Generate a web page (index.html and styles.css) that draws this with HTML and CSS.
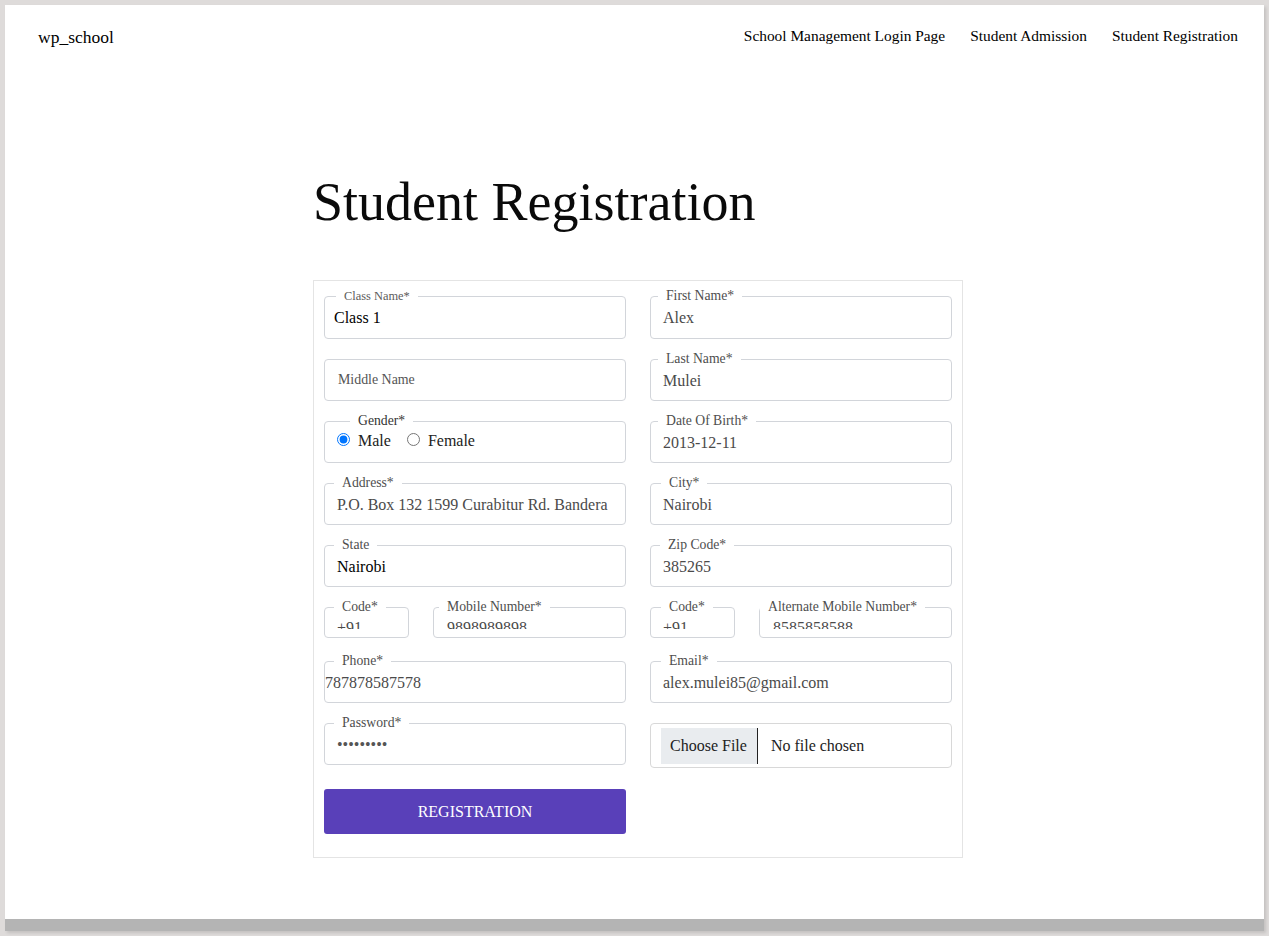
FILE: index.html
```html
<!DOCTYPE html>
<html lang="en">
<head>
<meta charset="utf-8">
<title>Student Registration</title>
<link rel="stylesheet" href="styles.css">
</head>
<body>
<div class="frame">
  <div class="page">
    <header class="topbar">
      <div class="brand">wp_school</div>
      <nav class="links">
        <a href="#">School Management Login Page</a>
        <a href="#">Student Admission</a>
        <a href="#">Student Registration</a>
      </nav>
    </header>
    <main class="main">
      <div class="col">
        <h1 class="title">Student Registration</h1>
        <form class="card">
          <div class="field first"><span class="lg lg-sm">Class Name*</span><div class="val pad9 dark">Class 1</div></div>
          <div class="field first"><span class="lg lg-r">First Name*</span><div class="val pad13">Alex</div></div>

          <div class="field"><div class="val pad14 ph">Middle Name</div></div>
          <div class="field"><span class="lg lg-r">Last Name*</span><div class="val pad13">Mulei</div></div>

          <div class="field"><span class="lg lg-wide">Gender*</span>
            <div class="val radios">
              <label class="opt"><input type="radio" name="g" checked> Male</label>
              <label class="opt"><input type="radio" name="g"> Female</label>
            </div>
          </div>
          <div class="field"><span class="lg lg-r">Date Of Birth*</span><div class="val pad13">2013-12-11</div></div>

          <div class="field"><span class="lg">Address*</span><div class="val pad13">P.O. Box 132 1599 Curabitur Rd. Bandera</div></div>
          <div class="field"><span class="lg lg-r2">City*</span><div class="val pad13">Nairobi</div></div>

          <div class="field"><span class="lg">State</span><div class="val pad13 dark">Nairobi</div></div>
          <div class="field"><span class="lg">Zip Code*</span><div class="val pad13">385265</div></div>

          <div class="pair">
            <div class="field sm code"><span class="lg">Code*</span><div class="clip pad13">+91</div></div>
            <div class="field sm grow"><span class="lg lg-m">Mobile Number*</span><div class="clip pad14">9898989898</div></div>
          </div>
          <div class="pair">
            <div class="field sm code"><span class="lg lg-r2">Code*</span><div class="clip pad13">+91</div></div>
            <div class="field sm grow"><span class="lg lg-tight">Alternate Mobile Number*</span><div class="clip pad14">8585858588</div></div>
          </div>

          <div class="field"><span class="lg">Phone*</span><div class="val pad0">787878587578</div></div>
          <div class="field"><span class="lg lg-r2">Email*</span><div class="val pad13">alex.mulei85@gmail.com</div></div>

          <div class="field"><span class="lg">Password*</span><div class="val pad13 dots">•••••••••</div></div>
          <div class="file">
            <span class="file-btn">Choose File</span>
            <span class="file-name">No file chosen</span>
          </div>

          <button type="button" class="submit">REGISTRATION</button>
        </form>
      </div>
    </main>
  </div>
  <div class="shadowbar"></div>
</div>
</body>
</html>
```

FILE: styles.css
```css
* { box-sizing: border-box; }

html, body {
  margin: 0;
  padding: 0;
}

body {
  background: #dedbda;
  font-family: "Liberation Serif", "Times New Roman", serif;
  color: #000;
  height: 936px;
  overflow: hidden;
}

.frame {
  margin: 5px 0 0 5px;
  width: 1259px;
  box-shadow: 2px 2px 3px rgba(0, 0, 0, 0.12);
}

.page {
  background: #fff;
  height: 914px;
}

.shadowbar {
  height: 12px;
  background: #b4b4b4;
}

.topbar {
  display: flex;
  justify-content: space-between;
  align-items: flex-start;
  padding: 22px 26px 0 33px;
}

.brand {
  font-size: 17.5px;
  line-height: 20px;
}

.links {
  display: flex;
  gap: 25px;
}

.links a {
  font-size: 15.4px;
  line-height: 18px;
  color: #000;
  text-decoration: none;
}

.main {
  display: flex;
  justify-content: center;
  padding-left: 7px;
}

.col {
  width: 650px;
}

.title {
  margin: 124px 0 47px 0;
  font-size: 54px;
  line-height: 62px;
  font-weight: normal;
  color: #0a0a0a;
}

.card {
  border: 1px solid #e4e4e4;
  padding: 15px 10px 23px 10px;
  display: grid;
  grid-template-columns: 302px 302px;
  column-gap: 24px;
  row-gap: 20px;
  align-items: start;
}

.field {
  position: relative;
  height: 42px;
  border: 1px solid #d2d5da;
  border-radius: 4px;
}

.field.first { height: 43px; }

.lg {
  position: absolute;
  top: -8px;
  left: 9px;
  padding: 0 8px;
  background: #fff;
  font-size: 13.7px;
  line-height: 14px;
  color: #4e4e4e;
  white-space: nowrap;
}

.lg-sm { font-size: 12.4px; left: 11px; color: #5c5c5c; }
.lg-r { left: 7px; }
.lg-r2 { left: 10px; }
.lg-m { left: 5px; }
.lg-wide { left: 25px; color: #333; }
.lg-tight { left: 0; }

.val {
  padding-top: 12px;
  font-size: 16px;
  line-height: 18px;
  color: #4a4a4a;
  white-space: nowrap;
  overflow: hidden;
}

.dark { color: #000; }

.ph {
  font-size: 13.9px;
  color: #555;
  padding-top: 11px;
}

.pad0 { padding-left: 0; }
.pad9 { padding-left: 9px; }
.pad13 { padding-left: 12px; }
.pad14 { padding-left: 13px; }

.dots { color: #555; }

.radios {
  padding-top: 10px;
  padding-left: 12px;
  color: #222;
  display: flex;
  gap: 16px;
}

.opt {
  display: inline-flex;
  align-items: center;
  gap: 8px;
}

.opt input {
  margin: 0;
  width: 13px;
  height: 13px;
  position: relative;
  top: -2px;
}

.pair {
  display: flex;
  gap: 24px;
  height: 34px;
}

.field.sm { height: 31px; }
.field.code { width: 85px; flex: none; }
.field.grow { flex: 1; }

.clip {
  height: 21px;
  overflow: hidden;
  padding-top: 12px;
  font-size: 16px;
  line-height: 16px;
  color: #4a4a4a;
  white-space: nowrap;
}

.file {
  height: 45px;
  border: 1px solid #d8d8d8;
  border-radius: 4px;
  padding: 3px 10px;
  display: flex;
  align-items: center;
  font-size: 16px;
}

.file-btn {
  background: #e9ecef;
  height: 36px;
  line-height: 36px;
  padding: 0 10px 0 9px;
  border-right: 1.5px solid #222;
  color: #222;
}

.file-name {
  margin-left: 13px;
  color: #222;
}

.submit {
  grid-column: 1;
  margin-top: 1px;
  height: 45px;
  border: none;
  border-radius: 3px;
  background: #5940b9;
  color: #fff;
  font-family: "Liberation Serif", "Times New Roman", serif;
  font-size: 16px;
  cursor: pointer;
}
```
